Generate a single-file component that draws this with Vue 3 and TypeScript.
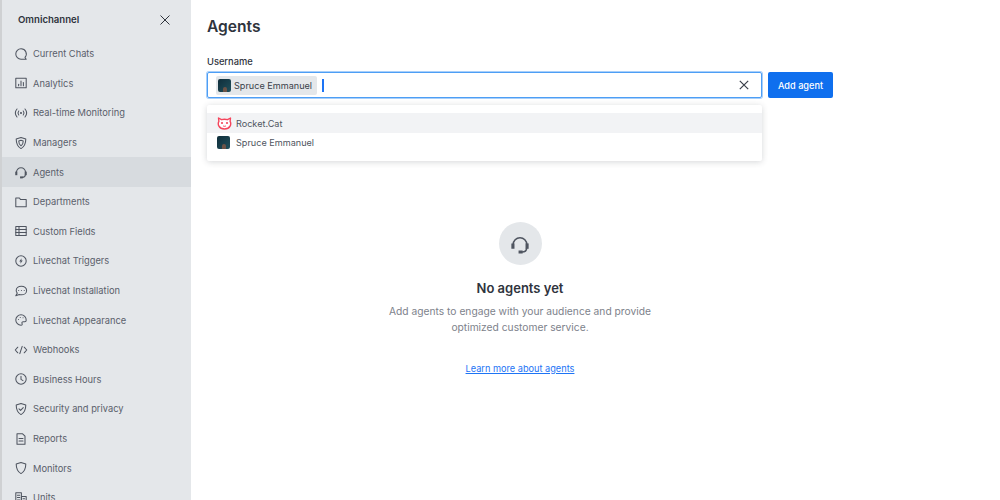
<script setup lang="ts">
interface NavItem { label: string; active?: boolean; paths: string[]; fills?: string[] }
const items: NavItem[] = [
  { label: 'Current Chats', paths: ['M10 3.500a6.500 6.500 0 1 0 0 13h6.500l-1.500-2.200a6.500 6.500 0 0 0-5-10.800Z'] },
  { label: 'Analytics', paths: ['M3.500 4h13v12h-13Z', 'M7 13.500v-2', 'M10 13.500v-6', 'M13 13.500v-4'] },
  { label: 'Real-time Monitoring', paths: ['M5 5c-2.500 3-2.500 7 0 10', 'M15 5c2.500 3 2.500 7 0 10', 'M7.200 7.500c-1.200 1.500-1.200 3.500 0 5', 'M12.800 7.500c1.200 1.500 1.200 3.500 0 5'], fills: ['M8.700 10a1.300 1.300 0 1 0 2.600 0a1.300 1.300 0 1 0-2.600 0Z'] },
  { label: 'Managers', paths: ['M10 3l6 2c0 5.500-1.500 9.500-6 12c-4.500-2.500-6-6.500-6-12Z', 'M10 6.500l2.800 1c0 3-.8 4.800-2.800 6c-2-1.200-2.800-3-2.800-6Z'] },
  { label: 'Agents', active: true, paths: ['M4.300 10.500a5.700 5.700 0 0 1 11.400 0', 'M15.500 13.500c0 2-1.500 3.200-4 3.200'], fills: ['M2.800 9.500h2.600v4.500h-2.600Z', 'M14.600 9.500h2.600v4.500h-2.600Z', 'M8.800 15.500h3.400v2.500h-3.400Z'] },
  { label: 'Departments', paths: ['M3.500 5h4.500l1.500 2h7v9h-13Z'] },
  { label: 'Custom Fields', paths: ['M3.500 4.500h13v11h-13Z', 'M3.500 8.200h13', 'M3.500 11.900h13', 'M7.500 4.500v11'] },
  { label: 'Livechat Triggers', paths: ['M10 3.500a6.500 6.500 0 1 0 0 13a6.500 6.500 0 1 0 0-13Z'], fills: ['M10.800 6.500l-3 4h1.800l-.4 3l3-4h-1.800Z'] },
  { label: 'Livechat Installation', paths: ['M10.500 4c-3.800 0-6.500 2.400-6.500 5.300c0 1.300.5 2.400 1.400 3.300L3.500 16l4.300-1.500c.8.200 1.700.3 2.700.3c3.600 0 6.500-2.300 6.500-5.500S14.100 4 10.500 4Z', 'M7 9.500h.1', 'M10.500 9.500h.1', 'M14 9.500h.1'] },
  { label: 'Livechat Appearance', paths: ['M10 3.500a6.500 6.500 0 0 0 0 13c1.500 0 1.800-1 1.300-2c-.6-1.200.2-2.300 1.500-2.300h2c1 0 1.700-.8 1.700-2a6.500 6.500 0 0 0-6.500-6.700Z', 'M6.800 9.500h.1', 'M9 6.800h.1', 'M12.500 7.200h.1'] },
  { label: 'Webhooks', paths: ['M6 6.500L2.800 10L6 13.500', 'M14 6.500L17.200 10L14 13.500', 'M11.500 5.500L8.500 14.500'] },
  { label: 'Business Hours', paths: ['M10 3.500a6.500 6.500 0 1 0 0 13a6.500 6.500 0 1 0 0-13Z', 'M10 6.500v4l2.500 1.500'] },
  { label: 'Security and privacy', paths: ['M10 3l6 2c0 5.500-1.500 9.500-6 12c-4.500-2.500-6-6.500-6-12Z', 'M7.500 9.800l2 2l3.300-3.500'] },
  { label: 'Reports', paths: ['M5 3.500h7l3 3v10h-10Z', 'M7.500 9.500h5', 'M7.500 12.500h5'] },
  { label: 'Monitors', paths: ['M10 3l6 2c0 5.500-1.500 9.500-6 12c-4.500-2.500-6-6.500-6-12Z'] },
  { label: 'Units', paths: ['M3.500 3.500h7v13h-7Z', 'M10.500 8h6v8.500h-6Z', 'M5.500 6.500h3', 'M5.500 9.500h3', 'M5.500 12.500h3', 'M12.500 11h2', 'M12.500 13.500h2'] },
]
</script>

<template>
  <div class="page">
    <aside class="sidebar">
      <header class="side-head">
        <span class="side-title">Omnichannel</span>
        <svg class="close" width="14" height="14" viewBox="0 0 14 14" aria-hidden="true"><path d="M2.500 2.500l9 9M11.500 2.500l-9 9" /></svg>
      </header>
      <nav class="nav">
        <div v-for="item in items" :key="item.label" class="nav-row" :class="{ active: item.active }">
          <svg class="nav-icon" width="16" height="16" viewBox="0 0 20 20" aria-hidden="true">
            <path v-for="d in item.paths" :key="d" :d="d" />
            <path v-for="d in item.fills ?? []" :key="d" :d="d" class="solid" />
          </svg>
          <span>{{ item.label }}</span>
        </div>
      </nav>
    </aside>

    <main class="main">
      <h1 class="title">Agents</h1>
      <label class="field-label">Username</label>
      <div class="field-row">
        <div class="combo-wrap">
          <div class="input">
            <span class="chip">
              <span class="avatar"><i class="figure"></i></span>
              <span>Spruce Emmanuel</span>
            </span>
            <span class="caret"></span>
            <svg class="clear" width="14" height="14" viewBox="0 0 14 14" aria-hidden="true"><path d="M2.800 2.800l8.400 8.400M11.200 2.800l-8.400 8.400" /></svg>
          </div>
          <div class="menu">
            <div class="option hovered">
              <svg class="cat" width="15" height="13" viewBox="0 0 14 13" aria-hidden="true">
                <path d="M1 1l3 1.700c1.900-.6 4.100-.6 6 0L13 1l-.4 3.300c1.500 2.800.3 7.700-5.600 7.700S-.1 7.100 1.400 4.300Z" />
                <circle cx="4.500" cy="6" r="1.100" /><circle cx="9.500" cy="6" r="1.100" />
                <path d="M5.500 8.800c.9.700 2.100.7 3 0" />
              </svg>
              <span>Rocket.Cat</span>
            </div>
            <div class="option">
              <span class="avatar"><i class="figure"></i></span>
              <span>Spruce Emmanuel</span>
            </div>
          </div>
        </div>
        <button class="add" type="button">Add agent</button>
      </div>

      <section class="empty">
        <div class="circle">
          <svg width="24" height="24" viewBox="0 0 20 20" aria-hidden="true">
            <path d="M4.300 10.500a5.700 5.700 0 0 1 11.400 0" />
            <path d="M15.500 13.500c0 2-1.500 3.200-4 3.200" />
            <path class="solid" d="M2.800 9.500h2.600v4.500h-2.600Z" />
            <path class="solid" d="M14.600 9.500h2.600v4.500h-2.600Z" />
            <path class="solid" d="M8.800 15.500h3.400v2.500h-3.400Z" />
          </svg>
        </div>
        <h2 class="empty-title">No agents yet</h2>
        <p class="empty-text">Add agents to engage with your audience and provide<br />optimized customer service.</p>
        <a class="learn" href="#">Learn more about agents</a>
      </section>
    </main>
  </div>
</template>

<style>
html, body { margin: 0; background: #fff; overflow: hidden; }
</style>

<style scoped>
.page {
  width: 1000px;
  height: 500px;
  display: flex;
  overflow: hidden;
  font-family: Inter, "Liberation Sans", sans-serif;
  color: #2f343d;
  background: #fff;
}
.sidebar {
  width: 189px;
  flex: none;
  height: 500px;
  overflow: hidden;
  background: #e4e7ea;
  border-left: 2px solid #cfd1d3;
}
.side-head {
  height: 39px;
  display: flex;
  align-items: center;
  justify-content: space-between;
  padding: 0 19px 0 16px;
}
.side-title { font-size: 9.600px; font-weight: 600; color: #2f343d; }
.close path { stroke: #2f343d; stroke-width: 1; fill: none; }
.nav { display: flex; flex-direction: column; }
.nav-row {
  height: 29.600px;
  flex: none;
  display: flex;
  align-items: center;
  gap: 4px;
  padding-left: 11px;
  font-size: 9.300px;
  color: #5a606b;
}
.nav-row.active { background: #d7dbdf; }
.nav-icon { flex: none; }
.nav-icon path { fill: none; stroke: #4f5560; stroke-width: 1.300; stroke-linejoin: round; stroke-linecap: round; }
.nav-icon path.solid { fill: #4f5560; stroke: none; }
.main { flex: 1; padding: 0 16px; min-width: 0; }
.title { margin: 0; padding-top: 16px; font-size: 15.600px; line-height: 22px; font-weight: 600; color: #2f343d; }
.field-label { display: block; margin-top: 16px; font-size: 9.300px; line-height: 16px; font-weight: 500; color: #2f343d; }
.field-row { display: flex; gap: 6px; margin-top: 2px; align-items: flex-start; }
.combo-wrap { width: 555px; flex: none; position: relative; }
.input {
  height: 26px;
  box-sizing: border-box;
  border: 1px solid #4d9ef5;
  box-shadow: 0 0 0 1px #a8cffa;
  border-radius: 2px;
  display: flex;
  align-items: center;
  padding: 0 10px 0 8px;
}
.chip {
  height: 19px;
  display: flex;
  align-items: center;
  gap: 3px;
  padding: 0 5px 0 2px;
  border-radius: 2px;
  background: #e4e7ea;
  font-size: 9.100px;
  color: #3a3f49;
}
.avatar {
  width: 13px;
  height: 13px;
  flex: none;
  border-radius: 2px;
  background: linear-gradient(135deg, #0f2d3a, #21505c);
  display: flex;
  align-items: flex-end;
  justify-content: center;
}
.figure { width: 4px; height: 5px; background: #6e5347; border-radius: 2px 2px 0 0; }
.caret { width: 2px; height: 13px; margin-left: 5px; background: #1d74f5; }
.clear { margin-left: auto; }
.clear path { stroke: #3a3f49; stroke-width: 1.200; fill: none; }
.menu {
  margin-top: 7px;
  height: 56px;
  box-sizing: border-box;
  padding-top: 8px;
  background: #fff;
  border-radius: 2px;
  box-shadow: 0 1px 6px rgba(47, 52, 61, 0.2);
}
.option {
  height: 20px;
  display: flex;
  align-items: center;
  gap: 6px;
  padding-left: 10px;
  font-size: 9.100px;
  color: #4f5560;
}
.option:last-child { margin-top: -0.500px; }
.option.hovered { background: #f2f3f5; gap: 4px; }
.cat path:first-child { fill: #fff; stroke: #f5455c; stroke-width: 1.400; stroke-linejoin: round; }
.cat path:last-child { fill: none; stroke: #f5455c; stroke-width: 1; }
.cat circle { fill: #f5455c; }
.add {
  width: 65px;
  height: 26px;
  border: none;
  border-radius: 2px;
  background: #0f6fee;
  color: #fff;
  font-family: inherit;
  font-size: 9.200px;
  font-weight: 500;
}
.empty {
  width: 626px;
  margin-top: 61px;
  display: flex;
  flex-direction: column;
  align-items: center;
}
.circle {
  width: 43px;
  height: 43px;
  border-radius: 50%;
  background: #e4e7ea;
  display: flex;
  align-items: center;
  justify-content: center;
}
.circle path { fill: none; stroke: #4f5560; stroke-width: 1.300; stroke-linecap: round; }
.circle path.solid { fill: #4f5560; stroke: none; }
.empty-title { margin: 14px 0 0; font-size: 13px; line-height: 18px; font-weight: 600; color: #2f343d; }
.empty-text { margin: 6px 0 0; font-size: 10.250px; line-height: 16px; text-align: center; color: #7d828b; }
.learn { margin-top: 27px; font-size: 9.200px; line-height: 13px; color: #1d74f5; text-decoration: underline; }
</style>
